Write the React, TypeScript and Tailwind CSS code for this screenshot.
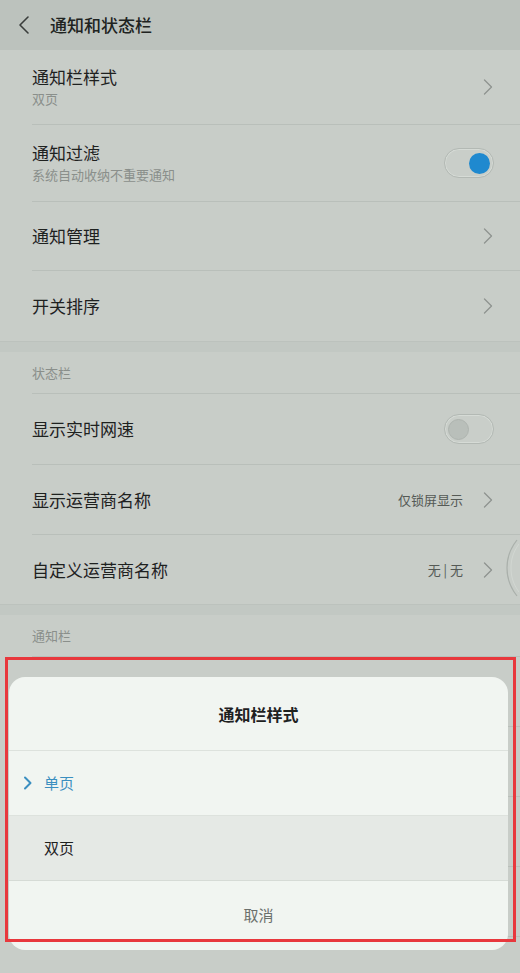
import React from 'react';

const Chevron = ({ color = '#8e938f' }: { color?: string }) => (
  <svg width="10" height="16" viewBox="0 0 10 16" fill="none">
    <path d="M1.5 1 L8.5 8 L1.5 15" stroke={color} strokeWidth="1.3" strokeLinecap="round" strokeLinejoin="round" />
  </svg>
);

const Toggle = ({ on }: { on: boolean }) => (
  <div className="w-[50px] h-[30px] rounded-full border border-[#b3b9b4] bg-[#c9cec9] shadow-[inset_0_0_0_1px_#d6dbd6] flex items-center px-[3px]">
    {on ? (
      <div className="ml-auto w-[21px] h-[21px] rounded-full bg-[#1f89cf]" />
    ) : (
      <div className="w-[21px] h-[21px] rounded-full bg-[#b9bfba] border border-[#aeb4af]" />
    )}
  </div>
);

function Row({
  title,
  sub,
  value,
  right,
  h,
  last,
}: {
  title?: string;
  sub?: string;
  value?: string;
  right?: 'chevron' | 'on' | 'off';
  h: string;
  last?: boolean;
}) {
  return (
    <div className="pl-[32px]">
      <div className={`${h} flex items-center pr-[27px] ${last ? '' : 'border-b border-[#b9bfba]'}`}>
        <div className="flex-1 flex flex-col">
          {title && <span className="text-[17px] leading-[20px] text-[#1e211f]">{title}</span>}
          {sub && <span className="text-[13px] leading-[16px] mt-[4px] text-[#8a8f8b]">{sub}</span>}
        </div>
        {value && <span className="text-[13px] text-[#555a56] mr-[20px]">{value}</span>}
        {right === 'chevron' && <Chevron />}
        {right === 'on' && <div className="-mr-[1px]"><Toggle on /></div>}
        {right === 'off' && <div className="-mr-[1px]"><Toggle on={false} /></div>}
      </div>
    </div>
  );
}

const SectionGap = () => <div className="h-[11px] bg-[#c2c8c3] border-t border-[#bcc2bd]" />;

const SectionHead = ({ label }: { label: string }) => (
  <div className="pl-[32px]">
    <div className="h-[42px] flex items-center border-b border-[#b9bfba] text-[13px] text-[#8a8f8b]">{label}</div>
  </div>
);

export default function App() {
  return (
    <div
      className="relative w-[520px] h-[973px] overflow-hidden bg-[#c8cdc8]"
      style={{ fontFamily: '"Noto Sans CJK SC", "Noto Sans", sans-serif' }}
    >
      {/* Header */}
      <header className="h-[50px] bg-[#bcc2bd] flex items-center">
        <svg className="ml-[18px]" width="12" height="20" viewBox="0 0 12 20" fill="none">
          <path d="M10 2 L2 10 L10 18" stroke="#3a3d3b" strokeWidth="1.6" strokeLinecap="round" strokeLinejoin="round" />
        </svg>
        <h1 className="ml-[20px] text-[17px] text-[#202321] font-medium">通知和状态栏</h1>
      </header>

      <Row title="通知栏样式" sub="双页" right="chevron" h="h-[75px]" />
      <Row title="通知过滤" sub="系统自动收纳不重要通知" right="on" h="h-[77px]" />
      <Row title="通知管理" right="chevron" h="h-[69px]" />
      <Row title="开关排序" right="chevron" h="h-[70px]" last />

      <SectionGap />
      <SectionHead label="状态栏" />
      <Row title="显示实时网速" right="off" h="h-[71px]" />
      <Row title="显示运营商名称" value="仅锁屏显示" right="chevron" h="h-[70px]" />
      <Row title="自定义运营商名称" value="无 | 无" right="chevron" h="h-[69px]" last />

      <SectionGap />
      <SectionHead label="通知栏" />
      {/* rows hidden behind the sheet */}
      <Row h="h-[70px]" />
      <Row h="h-[70px]" />
      <Row h="h-[70px]" />
      <Row h="h-[70px]" />

      {/* floating ball edge */}
      <svg className="absolute left-[505px] top-[538px]" width="14" height="60" viewBox="0 0 14 60" fill="none">
        <path d="M12 2 C4 12 2 22 2 30 C2 38 4 48 12 58" stroke="#aab0ab" strokeWidth="1.2" />
        <path d="M14 6 C8 14 6 22 6 30 C6 38 8 46 14 54" stroke="#d2d7d2" strokeWidth="1" />
      </svg>

      {/* Bottom sheet dialog */}
      <div className="absolute left-[9px] top-[677px] w-[499px] h-[273px] rounded-[16px] bg-[#f1f5f1] overflow-hidden flex flex-col">
        <div className="h-[74px] flex items-center justify-center border-b border-[#dde2dd]">
          <span className="text-[16px] font-bold text-[#1e211f]">通知栏样式</span>
        </div>
        <div className="h-[65px] flex items-center border-b border-[#dde2dd]">
          <svg className="ml-[14px]" width="10" height="14" viewBox="0 0 10 14" fill="none">
            <path d="M2 1.5 L7.5 7 L2 12.5" stroke="#3b8fc0" strokeWidth="2" strokeLinecap="round" strokeLinejoin="round" />
          </svg>
          <span className="ml-[11px] text-[15px] text-[#3b8fc0]">单页</span>
        </div>
        <div className="h-[65px] flex items-center bg-[#e5e9e5] border-b border-[#d6dbd6]">
          <span className="ml-[35px] text-[15px] text-[#1e211f]">双页</span>
        </div>
        <div className="flex-1 flex items-center justify-center">
          <span className="text-[15px] text-[#6b706c]">取消</span>
        </div>
      </div>

      {/* Highlight frame */}
      <div className="absolute left-[5px] top-[657px] w-[511px] h-[285px] border-[3px] border-[#e8383d] pointer-events-none" />
    </div>
  );
}
